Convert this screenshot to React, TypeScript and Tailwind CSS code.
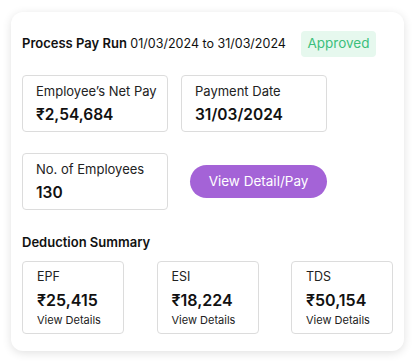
import React from "react";

const stats = [
  { label: "Employee’s Net Pay", value: "₹2,54,684" },
  { label: "Payment Date", value: "31/03/2024" },
];

const deductions = [
  { label: "EPF", value: "₹25,415" },
  { label: "ESI", value: "₹18,224" },
  { label: "TDS", value: "₹50,154" },
];

const StatBox = ({ label, value }: { label: string; value: string }) => (
  <div className="flex h-[57px] w-[146px] flex-col rounded-[4px] border border-[#dcdcdc] pl-[13px] pt-[5px]">
    <span className="text-[13px] leading-[20px] text-[#222]">{label}</span>
    <span className="mt-[3px] text-[15.5px] font-semibold leading-[22px] text-[#111]">
      {value}
    </span>
  </div>
);

const App = () => {
  return (
    <div
      className="h-[364px] w-[415px] bg-white pl-[11px] pt-[12px]"
      style={{ fontFamily: "Inter, 'Noto Sans', sans-serif" }}
    >
      <div className="h-[339px] w-[393px] rounded-[12px] bg-white pl-[11px] pr-[11px] pt-[18px] shadow-[0_2px_10px_rgba(0,0,0,0.12)]">
        <div className="flex items-center">
          <div className="text-[12.5px] leading-[26px] text-[#111]">
            <span className="text-[13px] font-semibold">Process Pay Run</span> 01/03/2024 to 31/03/2024
          </div>
          <div className="ml-auto mr-[17px] flex h-[26px] w-[75px] items-center justify-center rounded-[4px] bg-[#e6f8ee] text-[13.5px] text-[#3cbf7c]">
            Approved
          </div>
        </div>

        <div className="mt-[18px] flex gap-[13px]">
          {stats.map((s) => (
            <StatBox key={s.label} label={s.label} value={s.value} />
          ))}
        </div>

        <div className="mt-[21px] flex items-center">
          <StatBox label="No. of Employees" value="130" />
          <button className="ml-[22px] flex h-[33px] w-[137px] items-center justify-center rounded-full bg-[#a463d7] text-[13.5px] text-white">
            View Detail/Pay
          </button>
        </div>

        <div className="mt-[23px] text-[13px] font-semibold leading-[18px] text-[#111]">
          Deduction Summary
        </div>

        <div className="mt-[10px] flex justify-between">
          {deductions.map((d) => (
            <div
              key={d.label}
              className="flex h-[73px] w-[102px] flex-col rounded-[4px] border border-[#dcdcdc] pl-[14px] pt-[6px]"
            >
              <span className="text-[12.5px] leading-[18px] text-[#222]">{d.label}</span>
              <span className="mt-[3px] text-[16px] font-semibold leading-[22px] text-[#111]">
                {d.value}
              </span>
              <span className="mt-[1px] text-[11px] leading-[16px] text-[#222]">View Details</span>
            </div>
          ))}
        </div>
      </div>
    </div>
  );
};

export default App;
